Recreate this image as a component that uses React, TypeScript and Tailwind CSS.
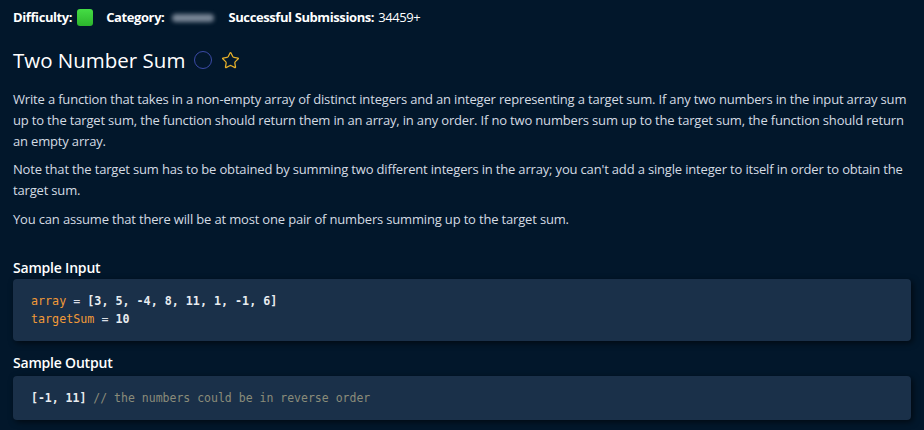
import { Star } from "lucide-react";

const sans = { fontFamily: '"Open Sans", "Noto Sans", sans-serif' };
const mono = { fontFamily: '"DejaVu Sans Mono", "Liberation Mono", monospace' };

const App = () => {
  return (
    <div className="min-h-[430px] w-[924px] bg-[#02172b] px-[13px] text-[#e3e8ee]" style={sans}>
      <div className="flex h-[35px] items-center text-[13px] tracking-[-0.4px]">
        <span className="font-bold text-white">Difficulty:</span>
        <span className="ml-[5px] h-[17px] w-[16px] rounded-[3px] bg-gradient-to-b from-[#45dd45] to-[#2cb52c]" />
        <span className="ml-[13px] font-bold text-white">Category:</span>
        <span className="ml-[8px] h-[8px] w-[42px] rounded-full bg-[#7a8797] blur-[2px]" />
        <span className="ml-[14px] font-bold text-white">Successful Submissions:</span>
        <span className="ml-[4px] text-white">34459+</span>
      </div>

      <div className="mt-[8px] flex items-center">
        <h1 className="text-[20.5px] font-medium leading-[34px] text-white">Two Number Sum</h1>
        <span className="ml-[9px] h-[18px] w-[18px] rounded-full border-[1.5px] border-[#3b4aa6]" />
        <Star className="ml-[9px] h-[19px] w-[19px] text-[#e6b02a]" strokeWidth={1.6} />
      </div>

      <div className="mt-[12px] text-[13px] leading-[21px] tracking-[-0.17px] text-[#d4dbe3]">
        <p>
          Write a function that takes in a non-empty array of distinct integers and an integer representing a target sum. If any two numbers in the input array sum up to the target sum, the function should return them in an array, in any order. If no two numbers sum up to the target sum, the function should return an empty array.
        </p>
        <p className="mt-[7px]">
          Note that the target sum has to be obtained by summing two different integers in the array; you can't add a single integer to itself in order to obtain the target sum.
        </p>
        <p className="mt-[8px]">
          You can assume that there will be at most one pair of numbers summing up to the target sum.
        </p>
      </div>

      <h2 className="mt-[28px] text-[14px] font-semibold leading-[20px] tracking-[-0.2px] text-white">Sample Input</h2>
      <div
        className="mt-[1px] w-[898px] rounded-[4px] bg-[#1a3049] px-[18px] py-[13px] text-[11.7px] leading-[18px] shadow-[2px_2px_6px_rgba(0,0,0,0.6)]"
        style={mono}
      >
        <div>
          <span className="text-[#f19a38]">array</span>
          <span className="text-[#d9dee5]"> = </span>
          <span className="font-bold text-[#e8ecf0]">[3, 5, -4, 8, 11, 1, -1, 6]</span>
        </div>
        <div>
          <span className="text-[#f19a38]">targetSum</span>
          <span className="text-[#d9dee5]"> = </span>
          <span className="font-bold text-[#e8ecf0]">10</span>
        </div>
      </div>

      <h2 className="mt-[12px] text-[14px] font-semibold leading-[20px] tracking-[-0.2px] text-white">Sample Output</h2>
      <div
        className="mt-[3px] w-[898px] rounded-[4px] bg-[#1a3049] px-[18px] py-[13px] text-[11.5px] leading-[18px] shadow-[2px_2px_6px_rgba(0,0,0,0.6)]"
        style={mono}
      >
        <span className="font-bold text-[#e8ecf0]">[-1, 11]</span>
        <span className="text-[#8a8c7a]"> // the numbers could be in reverse order</span>
      </div>
    </div>
  );
};

export default App;
